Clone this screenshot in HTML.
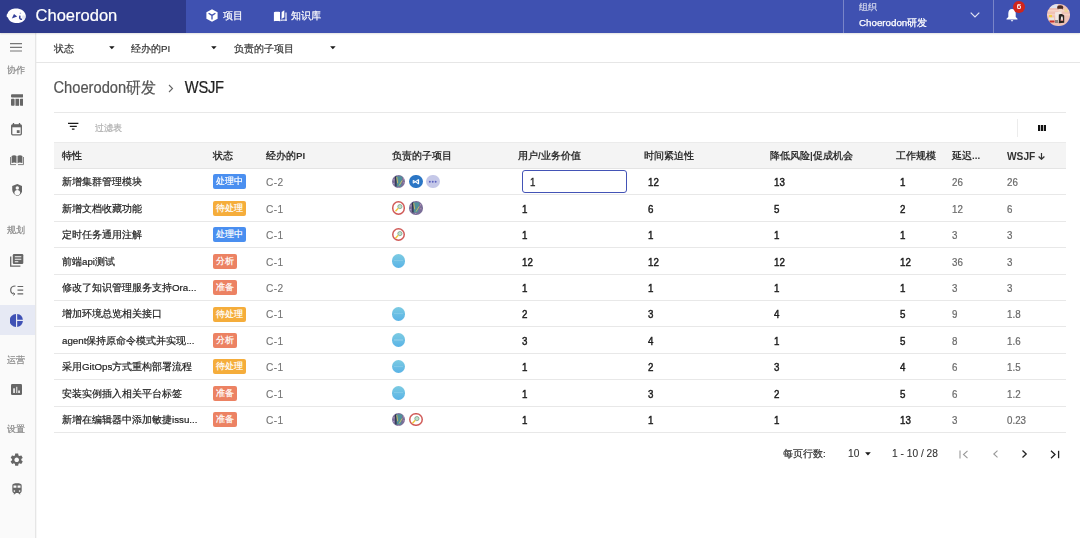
<!DOCTYPE html>
<html><head><meta charset="utf-8">
<style>
*{box-sizing:border-box}
html,body{margin:0;padding:0}
body{width:1080px;height:538px;overflow:hidden;position:relative;background:#fff;font-family:"Liberation Sans",sans-serif;color:#333;-webkit-text-stroke-width:0.2px}
.abs{position:absolute}
#hdr{position:absolute;left:0;top:0;width:1080px;height:33px;background:#3f51b1;box-shadow:0 1px 1.5px rgba(0,0,0,.12);z-index:2}
#hdrl{position:absolute;left:0;top:0;width:186px;height:33px;background:#2e3a8b;z-index:2}
.abs{z-index:3}
#side{position:absolute;left:0;top:33px;width:36px;height:505px;background:#fafafa;border-right:1px solid #e6e6e6;box-shadow:1px 0 1px rgba(0,0,0,.035)}
.slbl{position:absolute;left:0;width:32px;text-align:center;font-size:9px;color:#8a8a8a;line-height:12px}
.sic{position:absolute;left:9px;width:16px;height:16px}
#fbar{position:absolute;left:36px;top:62px;width:1044px;height:1px;background:#e6e6e6}
.flt{position:absolute;top:42px;font-size:9.75px;line-height:13px;color:#333}
.farr{position:absolute;top:46.3px;width:0;height:0;border-left:2.7px solid transparent;border-right:2.7px solid transparent;border-top:3.2px solid #1a1a1a}
.thead{position:absolute;left:54px;top:142px;width:1012px;height:27px;background:#f4f4f4;border-bottom:1px solid #e4e4e4;border-top:1px solid #ebebeb}
.th{position:absolute;top:148.5px;font-size:9.75px;line-height:14px;font-weight:bold;color:#333;white-space:nowrap;-webkit-text-stroke-width:0}
.sarr{font-weight:normal}
.rl{position:absolute;left:54px;width:1012px;height:1px;background:#e8e8e8}
.td{position:absolute;font-size:9.75px;line-height:14px;color:#222;white-space:nowrap}
.td.g{color:#6a6a6a;-webkit-text-stroke-width:0.2px}
.td.b{color:#1c1c1c;-webkit-text-stroke-width:0.4px}
.num{transform:translateY(0.9px) scaleY(1.15);transform-origin:50% 60%}
.tag{position:absolute;height:15px;border-radius:2px;color:#fff;font-size:9px;line-height:15px;text-align:center}
.av{position:absolute;width:13.5px;height:13.5px;border-radius:50%;overflow:hidden}
.av svg{position:absolute;left:0;top:0}
.inp{position:absolute;left:522px;width:105px;height:23.5px;border:1.7px solid #4353b6;border-radius:3px;background:#fff}
</style></head><body><div id="wrap" style="position:absolute;left:0;top:0;width:1080px;height:538px;opacity:0.999">
<div id="hdr"></div><div id="hdrl"></div>
<!-- logo -->
<svg class="abs" style="left:0;top:0" width="30" height="30" viewBox="0 0 30 30">
 <path d="M7.6 13.4 C9 9.8 12.8 8.6 16 8.6 C21 8.6 25 11 25.8 15.5 C26.2 20 22 23.1 17 23.1 C12.5 23.1 9 21.2 8 17.8 L6.6 16.4 L6.8 14.6 Z" fill="#fff"/>
 <path d="M11.8 18.4 L14 14 L17.2 16.6 Z" fill="#34409a"/>
 <path d="M19.9 15.6 C19.3 18.2 20.2 19.8 22 19.1" stroke="#34409a" stroke-width="1.5" fill="none"/>
 <circle cx="20.4" cy="13.2" r="0.8" fill="#aab0dc"/>
 <ellipse cx="23.6" cy="17.2" rx="1.6" ry="2" fill="#e3e5f2"/>
</svg>
<div class="abs" style="left:35.6px;top:4.9px;font-size:16.5px;line-height:20px;color:#fff">Choerodon</div>
<!-- nav -->
<svg class="abs" style="left:206px;top:9px" width="12" height="13" viewBox="0 0 12 13">
 <path d="M6 0.3 L11.6 3.3 L11.6 9.7 L6 12.7 L0.4 9.7 L0.4 3.3 Z" fill="#fff"/>
 <path d="M2.6 4.3 L6 6.4 L9.4 4.3 M6 6.4 L6 10.4" stroke="#3f51b1" stroke-width="1.3" fill="none"/>
</svg>
<div class="abs" style="left:222.5px;top:9px;font-size:9.75px;line-height:13px;color:#fff">项目</div>
<svg class="abs" style="left:273px;top:9px" width="15" height="13" viewBox="0 0 15 13">
 <path d="M0.9 3.3 C2.6 2.7 5.2 2.7 7 3.1 V12.3 C5.2 11.9 2.6 11.9 0.9 12.3 Z" fill="#fff"/>
 <path d="M8.5 9.9 L8.7 3 L11.3 1.2 L11.3 8.3 Z" fill="#fff"/>
 <rect x="12.3" y="3.5" width="1.4" height="8.3" fill="#fff" opacity=".8"/>
 <path d="M7.3 10.6 H13.7 V12 C11.5 11.7 9.5 11.9 7.3 12.3 Z" fill="#fff" opacity=".8"/>
</svg>
<div class="abs" style="left:291px;top:9px;font-size:9.75px;line-height:13px;color:#fff">知识库</div>
<!-- org -->
<div class="abs" style="left:843px;top:0;width:1px;height:33px;background:rgba(255,255,255,.3)"></div>
<div class="abs" style="left:993px;top:0;width:1px;height:33px;background:rgba(255,255,255,.3)"></div>
<div class="abs" style="left:859px;top:1px;font-size:9px;line-height:12px;color:rgba(255,255,255,.7)">组织</div>
<div class="abs" style="left:859px;top:15.5px;font-size:9.75px;line-height:13px;color:#fff;-webkit-text-stroke:0.25px #fff">Choerodon研发</div>
<svg class="abs" style="left:970px;top:12px" width="10" height="6" viewBox="0 0 10 6"><path d="M0.7 0.7 L5 5 L9.3 0.7" stroke="#fff" stroke-width="1.2" fill="none" opacity=".85"/></svg>
<!-- bell -->
<svg class="abs" style="left:1006px;top:8px" width="12" height="14" viewBox="0 0 12 14">
 <path d="M6 1 C8.5 1 9.7 3 9.7 5.5 L9.7 9 L11.5 10.8 L11.5 11.5 L0.5 11.5 L0.5 10.8 L2.3 9 L2.3 5.5 C2.3 3 3.5 1 6 1 Z" fill="#fff"/>
 <path d="M4.8 12.3 L7.2 12.3 C7.2 13 6.6 13.4 6 13.4 C5.4 13.4 4.8 13 4.8 12.3Z" fill="#fff"/>
</svg>
<div class="abs" style="left:1013px;top:0.5px;width:12px;height:12px;border-radius:50%;background:#d0251c;color:#fff;font-size:8px;line-height:12px;text-align:center">6</div>
<!-- avatar -->
<div class="abs" style="left:1047px;top:3.7px;width:22.6px;height:22.6px;border-radius:50%;background:#efc2b6;overflow:hidden">
 <svg width="23" height="23" viewBox="0 0 23 23" style="filter:blur(0.3px)">
  <g>
  <rect x="0" y="6" width="23" height="1.5" fill="#f6d3c8"/>
  <rect x="0" y="10" width="23" height="1.5" fill="#f6d0c4"/>
  <path d="M2 0 H11 L10 4 H3 Z" fill="#dfe3ee"/>
  <path d="M17 4.5 L20.5 5 L21 8.5 L17.5 8 Z" fill="#eed590" opacity=".8"/>
  <ellipse cx="13.2" cy="3.6" rx="3" ry="2.4" fill="#4a2c24"/>
  <rect x="11.2" y="4.8" width="4" height="3.4" fill="#f3d6c8"/>
  <path d="M8 8.3 L14.5 7.8 L15 17 L8.5 18.8 Z" fill="#f3e8e3"/>
  <path d="M11.8 10.5 C13 9.6 16.3 9.8 17.2 11.8 L17.2 18.8 L11.8 19.2 Z" fill="#2a2320"/>
  <path d="M14.2 12.5 L15.6 12.5 L16.2 16.8 L13.6 16.8 Z" fill="#f2ece8"/>
  <circle cx="15" cy="16.3" r="0.7" fill="#e05050"/>
  <rect x="2" y="11" width="3" height="2.5" fill="#f0d040"/>
  <rect x="2" y="13.5" width="5" height="3" fill="#e8e6e4"/>
  <rect x="2.5" y="16.5" width="5" height="2" fill="#c8302a"/>
  <rect x="8" y="16" width="3" height="3" fill="#8d8480"/>
  </g>
 </svg>
</div>

<!-- sidebar -->
<div id="side"></div>
<svg class="abs" style="left:10px;top:43px" width="12" height="9" viewBox="0 0 12 9"><path d="M0 0.6 H12 M0 4.3 H12 M0 8 H12" stroke="#777" stroke-width="1.2"/></svg>
<div class="slbl" style="top:64px">协作</div>
<svg class="abs" style="left:10.5px;top:94px" width="12.5" height="12" viewBox="0 0 12.5 12"><rect x="0" y="0.2" width="12.5" height="3.2" rx="1" fill="#666"/><rect x="0" y="4.8" width="3.6" height="7" rx="0.8" fill="#666"/><rect x="4.45" y="4.8" width="3.6" height="7" fill="#666"/><rect x="8.9" y="4.8" width="3.6" height="7" rx="0.8" fill="#666"/></svg>
<svg class="abs" style="left:11px;top:123px" width="11" height="12.5" viewBox="0 0 11 12.5"><path d="M2.5 0 V2 M8.5 0 V2" stroke="#666" stroke-width="1.3"/><rect x="0.7" y="1.8" width="9.6" height="10" rx="1" fill="none" stroke="#666" stroke-width="1.3"/><rect x="0.7" y="1.8" width="9.6" height="2.5" fill="#666"/><rect x="5.8" y="7.2" width="2.8" height="2.8" fill="#666"/></svg>
<svg class="abs" style="left:10px;top:155px" width="14" height="10.5" viewBox="0 0 14 10.5"><path d="M1.6 1 C3.2 0.1 5.2 0.1 6.5 1.1 V8.2 C5.2 7.4 3.2 7.4 1.6 8.2 Z" fill="#666"/><path d="M12.4 1 C10.8 0.1 8.8 0.1 7.5 1.1 V8.2 C8.8 7.4 10.8 7.4 12.4 8.2 Z" fill="#666"/><path d="M0.5 2 V9.6 H6 M13.5 2 V9.6 H8" stroke="#777" stroke-width="0.9" fill="none"/></svg>
<svg class="abs" style="left:11.7px;top:184.3px" width="10.6" height="12.2" viewBox="0 0 10 12"><path d="M5 0 L10 2 V5.5 C10 8.5 8 11 5 12 C2 11 0 8.5 0 5.5 V2 Z" fill="#666"/><circle cx="5" cy="3.9" r="1.7" fill="#fafafa"/><path d="M2.2 8.5 C2.2 6.9 3.5 6 5 6 C6.5 6 7.8 6.9 7.8 8.5 C7.8 9.3 7.3 10 6.8 10.5 C6.2 10.9 5.6 11.2 5 11.4 C4.4 11.2 3.8 10.9 3.2 10.5 C2.7 10 2.2 9.3 2.2 8.5Z" fill="#fafafa"/></svg>
<div class="slbl" style="top:224px">规划</div>
<svg class="abs" style="left:10px;top:253.5px" width="13.5" height="13" viewBox="0 0 13.5 13"><path d="M0.7 2.5 V12.2 H10.4" stroke="#666" stroke-width="1.3" fill="none"/><rect x="2.8" y="0" width="10.5" height="10" rx="1.2" fill="#666"/><path d="M4.8 2.8 H11.3 M4.8 5.3 H11.3 M4.8 7.8 H8.3" stroke="#fafafa" stroke-width="1.1"/></svg>
<svg class="abs" style="left:10px;top:285px" width="14" height="11" viewBox="0 0 14 11"><path d="M7.5 1.5 H13.2 M7.5 5.2 H13.2 M7.5 8.8 H13.2" stroke="#666" stroke-width="1.2"/><path d="M5.5 1 C2.5 1 0.7 2.8 0.7 5 C0.7 7.2 2.3 8.9 4.6 9" stroke="#666" stroke-width="1.2" fill="none"/><path d="M3.4 7.6 L4.9 9 L3.4 10.4" stroke="#666" stroke-width="1" fill="none"/></svg>
<div class="abs" style="left:0;top:305px;width:35px;height:30px;background:#e6e9f4"></div>
<svg class="abs" style="left:10px;top:314px" width="13" height="13" viewBox="0 0 13 13"><path d="M6 0.1 A6.4 6.4 0 0 0 6 12.9 Z" fill="#3f51b5"/><path d="M7.2 0.1 A6.4 6.4 0 0 1 12.9 5.8 H7.2 Z" fill="#3f51b5"/><path d="M7.2 7.1 H12.9 A6.4 6.4 0 0 1 7.2 12.9 Z" fill="#3f51b5"/></svg>
<div class="slbl" style="top:353.5px">运营</div>
<svg class="abs" style="left:11px;top:384px" width="11" height="11" viewBox="0 0 11 11"><rect width="11" height="11" rx="1.3" fill="#666"/><rect x="2.1" y="4.3" width="1.9" height="4.7" fill="#e0e0e0"/><rect x="5.2" y="2.8" width="1.1" height="6.2" fill="#e8e8e8"/><rect x="7.1" y="6.5" width="1.9" height="2.5" fill="#e0e0e0"/></svg>
<div class="slbl" style="top:423px">设置</div>
<svg class="abs" style="left:8.9px;top:451.5px" width="15.4" height="15.4" viewBox="0 0 24 24"><path fill="#666" d="M19.14 12.94c.04-.3.06-.61.06-.94 0-.32-.02-.64-.07-.94l2.03-1.58c.18-.14.23-.41.12-.61l-1.92-3.32c-.12-.22-.37-.29-.59-.22l-2.39.96c-.5-.38-1.03-.7-1.62-.94l-.36-2.54c-.04-.24-.24-.41-.48-.41h-3.840c-.24 0-.43.17-.47.41l-.36 2.54c-.59.24-1.13.57-1.62.94l-2.39-.96c-.22-.08-.47 0-.59.22L2.74 8.87c-.12.21-.08.47.12.61l2.03 1.58c-.05.3-.09.63-.09.94s.02.64.07.94l-2.03 1.58c-.18.14-.23.41-.12.61l1.92 3.32c.12.22.37.29.59.22l2.39-.96c.5.38 1.03.7 1.62.94l.36 2.54c.05.24.24.41.48.41h3.84c.24 0 .44-.17.47-.41l.36-2.54c.59-.24 1.13-.56 1.62-.94l2.39.96c.22.08.47 0 .59-.22l1.920-3.32c.12-.22.07-.47-.12-.61l-2.01-1.58zM12 15.6c-1.98 0-3.6-1.62-3.6-3.6s1.62-3.6 3.6-3.6 3.6 1.62 3.6 3.6-1.62 3.6-3.6 3.6z"/></svg>
<svg class="abs" style="left:9.66px;top:482.1px" width="14" height="14" viewBox="0 0 24 24"><path fill="#666" d="M12 2c-4 0-8 .5-8 4v9.5C4 17.43 5.57 19 7.5 19L6 20.5v.5h2.23l2-2H14l2 2h2v-.5L16.5 19c1.93 0 3.5-1.57 3.5-3.5V6c0-3.5-3.58-4-8-4zM7.5 17c-.83 0-1.5-.67-1.5-1.5S6.670 14 7.5 14s1.5.67 1.5 1.5S8.33 17 7.5 17zm3.5-7H6V6h5v4zm2 0V6h5v4h-5zm3.5 7c-.83 0-1.5-.67-1.5-1.5s.67-1.5 1.5-1.5 1.5.67 1.5 1.5-.67 1.5-1.5 1.5z"/></svg>

<!-- filter bar -->
<div id="fbar"></div>
<div class="flt" style="left:54px">状态</div><svg class="abs" style="left:108.5px;top:46.1px" width="6" height="4" viewBox="0 0 6 4"><path d="M0.1 0.2 H5.6 L2.85 3.3 Z" fill="#1a1a1a"/></svg>
<div class="flt" style="left:131px">经办的PI</div><svg class="abs" style="left:211px;top:46.1px" width="6" height="4" viewBox="0 0 6 4"><path d="M0.1 0.2 H5.6 L2.85 3.3 Z" fill="#1a1a1a"/></svg>
<div class="flt" style="left:234px">负责的子项目</div><svg class="abs" style="left:330px;top:46.1px" width="6" height="4" viewBox="0 0 6 4"><path d="M0.1 0.2 H5.6 L2.85 3.3 Z" fill="#1a1a1a"/></svg>

<!-- title -->
<div class="abs" style="left:53.5px;top:78px;font-size:14.7px;line-height:18px;color:#555;transform:translateY(0.6px) scaleY(1.08);transform-origin:0 75%">Choerodon研发</div>
<svg class="abs" style="left:168px;top:83.5px" width="6" height="9" viewBox="0 0 6 9"><path d="M1 1 L4.5 4.5 L1 8" stroke="#666" stroke-width="1.1" fill="none"/></svg>
<div class="abs" style="left:184.8px;top:78px;font-size:14.7px;line-height:18px;color:#222;letter-spacing:-0.25px;transform:translateY(0.8px) scaleY(1.1);transform-origin:0 75%">WSJF</div>
<div class="abs" style="left:54px;top:111.5px;width:1012px;height:1px;background:#e8e8e8"></div>

<!-- table toolbar -->
<svg class="abs" style="left:68px;top:122px" width="11" height="9" viewBox="0 0 11 9"><path d="M0 1.4 H10.4 M1.8 4.4 H8.8 M3.9 7.1 H6.5" stroke="#1a1a1a" stroke-width="1.15"/></svg>
<div class="abs" style="left:94.8px;top:122px;font-size:9px;line-height:13px;color:#b0b0b0">过滤表</div>
<div class="abs" style="left:1016.5px;top:119px;width:1px;height:18px;background:#ececec"></div>
<svg class="abs" style="left:1038px;top:125px" width="8" height="6" viewBox="0 0 8 6"><rect x="0" y="0" width="2.2" height="6" fill="#111"/><rect x="2.9" y="0" width="2.2" height="6" fill="#111"/><rect x="5.8" y="0" width="2.2" height="6" fill="#111"/></svg>

<div class="thead"></div>
<div class="th" style="left:62px">特性</div>
<div class="th" style="left:213px">状态</div>
<div class="th" style="left:266px">经办的PI</div>
<div class="th" style="left:392px">负责的子项目</div>
<div class="th" style="left:518px">用户/业务价值</div>
<div class="th" style="left:644px">时间紧迫性</div>
<div class="th" style="left:770px">降低风险|促成机会</div>
<div class="th" style="left:896px">工作规模</div>
<div class="th" style="left:952px">延迟...</div>
<div class="th" style="left:1007px;font-size:10.2px;top:150px">WSJF</div><svg class="abs" style="left:1038px;top:153.3px" width="7" height="7" viewBox="0 0 7 7"><path d="M3.5 0 V6.3 M0.6 3.5 L3.5 6.3 L6.4 3.5" stroke="#333" stroke-width="1.2" fill="none"/></svg>
<div class="rl" style="top:194.32px"></div>
<div class="td" style="left:62px;top:175.31px">新增集群管理模块</div>
<div class="tag" style="left:213px;top:174.41px;width:33px;background:#4a8ff0">处理中</div>
<div class="td g num" style="left:266px;top:175.31px;font-size:10.2px;color:#737373;letter-spacing:0.35px;-webkit-text-stroke-width:0.1px">C-2</div>
<div class="av" style="left:391.7px;top:174.9px;background:#7a6e98"><svg width="13.5" height="13.5" viewBox="0 0 14 14"><circle cx="2" cy="5" r="0.7" fill="#c8a2c4"/><circle cx="1.8" cy="9" r="0.6" fill="#b9a8d8"/><circle cx="12" cy="4" r="0.7" fill="#c8a2c4"/><circle cx="12.3" cy="8" r="0.6" fill="#d0a8c0"/><circle cx="7" cy="12.8" r="0.6" fill="#c8a2c4"/><circle cx="6" cy="0.9" r="0.6" fill="#b9a8d8"/><path d="M4.4 1.3 L10.8 1.6 L9.4 12 L4.6 12 Z" fill="#4f909a"/><path d="M3 1.5 L4.6 1.3 L4.8 12 L3.4 12 Z" fill="#2e3550"/><path d="M4.9 2 L5.9 8.6" stroke="#d8c060" stroke-width="0.9"/><path d="M7.3 11 L10.6 5.6" stroke="#d8c060" stroke-width="0.9"/></svg></div>
<div class="av" style="left:409.0px;top:174.9px;background:#2b76c5"><svg width="13.5" height="13.5" viewBox="0 0 14 14"><path d="M4.4 5.4 V8.6" stroke="#fff" stroke-width="1.1"/><path d="M4.4 5.6 L9.5 9 M4.4 8.4 L9.5 5" stroke="#fff" stroke-width="1.1" fill="none"/><path d="M9.8 4.5 V9.5" stroke="#fff" stroke-width="1.4"/></svg></div>
<div class="av" style="left:426.3px;top:174.9px;background:#c5c8e8"><svg width="13.5" height="13.5" viewBox="0 0 14 14"><circle cx="4" cy="7" r="1" fill="#5c63c0"/><circle cx="7" cy="7" r="1" fill="#5c63c0"/><circle cx="10" cy="7" r="1" fill="#5c63c0"/></svg></div>
<div class="inp" style="top:169.71px"></div>
<div class="td num" style="left:530px;top:175.31px;color:#222;-webkit-text-stroke-width:0.25px">1</div>
<div class="td b num" style="left:648px;top:175.31px">12</div>
<div class="td b num" style="left:774px;top:175.31px">13</div>
<div class="td b num" style="left:900px;top:175.31px">1</div>
<div class="td g num" style="left:952px;top:175.31px">26</div>
<div class="td g num" style="left:1007px;top:175.31px">26</div>
<div class="rl" style="top:220.74px"></div>
<div class="td" style="left:62px;top:201.73px">新增文档收藏功能</div>
<div class="tag" style="left:213px;top:200.83px;width:33px;background:#f5ad3b">待处理</div>
<div class="td g num" style="left:266px;top:201.73px;font-size:10.2px;color:#737373;letter-spacing:0.35px;-webkit-text-stroke-width:0.1px">C-1</div>
<div class="av" style="left:391.7px;top:201.3px;background:#fff;box-shadow:inset 0 0 0 1.5px #d05a57"><svg width="13.5" height="13.5" viewBox="0 0 14 14"><circle cx="8.2" cy="5.8" r="2.2" fill="#bfe3c8" stroke="#6f8f80" stroke-width="0.7"/><path d="M3.6 10.6 L6.5 7.6" stroke="#f0c93a" stroke-width="1.6"/></svg></div>
<div class="av" style="left:409.0px;top:201.3px;background:#7a6e98"><svg width="13.5" height="13.5" viewBox="0 0 14 14"><circle cx="2" cy="5" r="0.7" fill="#c8a2c4"/><circle cx="1.8" cy="9" r="0.6" fill="#b9a8d8"/><circle cx="12" cy="4" r="0.7" fill="#c8a2c4"/><circle cx="12.3" cy="8" r="0.6" fill="#d0a8c0"/><circle cx="7" cy="12.8" r="0.6" fill="#c8a2c4"/><circle cx="6" cy="0.9" r="0.6" fill="#b9a8d8"/><path d="M4.4 1.3 L10.8 1.6 L9.4 12 L4.6 12 Z" fill="#4f909a"/><path d="M3 1.5 L4.6 1.3 L4.8 12 L3.4 12 Z" fill="#2e3550"/><path d="M4.9 2 L5.9 8.6" stroke="#d8c060" stroke-width="0.9"/><path d="M7.3 11 L10.6 5.6" stroke="#d8c060" stroke-width="0.9"/></svg></div>
<div class="td b num" style="left:522px;top:201.73px">1</div>
<div class="td b num" style="left:648px;top:201.73px">6</div>
<div class="td b num" style="left:774px;top:201.73px">5</div>
<div class="td b num" style="left:900px;top:201.73px">2</div>
<div class="td g num" style="left:952px;top:201.73px">12</div>
<div class="td g num" style="left:1007px;top:201.73px">6</div>
<div class="rl" style="top:247.16px"></div>
<div class="td" style="left:62px;top:228.15px">定时任务通用注解</div>
<div class="tag" style="left:213px;top:227.25px;width:33px;background:#4a8ff0">处理中</div>
<div class="td g num" style="left:266px;top:228.15px;font-size:10.2px;color:#737373;letter-spacing:0.35px;-webkit-text-stroke-width:0.1px">C-1</div>
<div class="av" style="left:391.7px;top:227.7px;background:#fff;box-shadow:inset 0 0 0 1.5px #d05a57"><svg width="13.5" height="13.5" viewBox="0 0 14 14"><circle cx="8.2" cy="5.8" r="2.2" fill="#bfe3c8" stroke="#6f8f80" stroke-width="0.7"/><path d="M3.6 10.6 L6.5 7.6" stroke="#f0c93a" stroke-width="1.6"/></svg></div>
<div class="td b num" style="left:522px;top:228.15px">1</div>
<div class="td b num" style="left:648px;top:228.15px">1</div>
<div class="td b num" style="left:774px;top:228.15px">1</div>
<div class="td b num" style="left:900px;top:228.15px">1</div>
<div class="td g num" style="left:952px;top:228.15px">3</div>
<div class="td g num" style="left:1007px;top:228.15px">3</div>
<div class="rl" style="top:273.58px"></div>
<div class="td" style="left:62px;top:254.57px">前端api测试</div>
<div class="tag" style="left:213px;top:253.67px;width:24px;background:#ec8263">分析</div>
<div class="td g num" style="left:266px;top:254.57px;font-size:10.2px;color:#737373;letter-spacing:0.35px;-webkit-text-stroke-width:0.1px">C-1</div>
<div class="av" style="left:391.7px;top:254.1px;background:linear-gradient(#7ccbe2,#5ab3e6)"><div style="position:absolute;left:2px;top:6px;width:9.5px;height:1.2px;background:rgba(255,255,255,.15)"></div></div>
<div class="td b num" style="left:522px;top:254.57px">12</div>
<div class="td b num" style="left:648px;top:254.57px">12</div>
<div class="td b num" style="left:774px;top:254.57px">12</div>
<div class="td b num" style="left:900px;top:254.57px">12</div>
<div class="td g num" style="left:952px;top:254.57px">36</div>
<div class="td g num" style="left:1007px;top:254.57px">3</div>
<div class="rl" style="top:300.00px"></div>
<div class="td" style="left:62px;top:280.99px">修改了知识管理服务支持Ora...</div>
<div class="tag" style="left:213px;top:280.09px;width:24px;background:#ec8263">准备</div>
<div class="td g num" style="left:266px;top:280.99px;font-size:10.2px;color:#737373;letter-spacing:0.35px;-webkit-text-stroke-width:0.1px">C-2</div>
<div class="td b num" style="left:522px;top:280.99px">1</div>
<div class="td b num" style="left:648px;top:280.99px">1</div>
<div class="td b num" style="left:774px;top:280.99px">1</div>
<div class="td b num" style="left:900px;top:280.99px">1</div>
<div class="td g num" style="left:952px;top:280.99px">3</div>
<div class="td g num" style="left:1007px;top:280.99px">3</div>
<div class="rl" style="top:326.42px"></div>
<div class="td" style="left:62px;top:307.41px">增加环境总览相关接口</div>
<div class="tag" style="left:213px;top:306.51px;width:33px;background:#f5ad3b">待处理</div>
<div class="td g num" style="left:266px;top:307.41px;font-size:10.2px;color:#737373;letter-spacing:0.35px;-webkit-text-stroke-width:0.1px">C-1</div>
<div class="av" style="left:391.7px;top:307.0px;background:linear-gradient(#7ccbe2,#5ab3e6)"><div style="position:absolute;left:2px;top:6px;width:9.5px;height:1.2px;background:rgba(255,255,255,.15)"></div></div>
<div class="td b num" style="left:522px;top:307.41px">2</div>
<div class="td b num" style="left:648px;top:307.41px">3</div>
<div class="td b num" style="left:774px;top:307.41px">4</div>
<div class="td b num" style="left:900px;top:307.41px">5</div>
<div class="td g num" style="left:952px;top:307.41px">9</div>
<div class="td g num" style="left:1007px;top:307.41px">1.8</div>
<div class="rl" style="top:352.84px"></div>
<div class="td" style="left:62px;top:333.83px">agent保持原命令模式并实现...</div>
<div class="tag" style="left:213px;top:332.93px;width:24px;background:#ec8263">分析</div>
<div class="td g num" style="left:266px;top:333.83px;font-size:10.2px;color:#737373;letter-spacing:0.35px;-webkit-text-stroke-width:0.1px">C-1</div>
<div class="av" style="left:391.7px;top:333.4px;background:linear-gradient(#7ccbe2,#5ab3e6)"><div style="position:absolute;left:2px;top:6px;width:9.5px;height:1.2px;background:rgba(255,255,255,.15)"></div></div>
<div class="td b num" style="left:522px;top:333.83px">3</div>
<div class="td b num" style="left:648px;top:333.83px">4</div>
<div class="td b num" style="left:774px;top:333.83px">1</div>
<div class="td b num" style="left:900px;top:333.83px">5</div>
<div class="td g num" style="left:952px;top:333.83px">8</div>
<div class="td g num" style="left:1007px;top:333.83px">1.6</div>
<div class="rl" style="top:379.26px"></div>
<div class="td" style="left:62px;top:360.25px">采用GitOps方式重构部署流程</div>
<div class="tag" style="left:213px;top:359.35px;width:33px;background:#f5ad3b">待处理</div>
<div class="td g num" style="left:266px;top:360.25px;font-size:10.2px;color:#737373;letter-spacing:0.35px;-webkit-text-stroke-width:0.1px">C-1</div>
<div class="av" style="left:391.7px;top:359.8px;background:linear-gradient(#7ccbe2,#5ab3e6)"><div style="position:absolute;left:2px;top:6px;width:9.5px;height:1.2px;background:rgba(255,255,255,.15)"></div></div>
<div class="td b num" style="left:522px;top:360.25px">1</div>
<div class="td b num" style="left:648px;top:360.25px">2</div>
<div class="td b num" style="left:774px;top:360.25px">3</div>
<div class="td b num" style="left:900px;top:360.25px">4</div>
<div class="td g num" style="left:952px;top:360.25px">6</div>
<div class="td g num" style="left:1007px;top:360.25px">1.5</div>
<div class="rl" style="top:405.68px"></div>
<div class="td" style="left:62px;top:386.67px">安装实例插入相关平台标签</div>
<div class="tag" style="left:213px;top:385.77px;width:24px;background:#ec8263">准备</div>
<div class="td g num" style="left:266px;top:386.67px;font-size:10.2px;color:#737373;letter-spacing:0.35px;-webkit-text-stroke-width:0.1px">C-1</div>
<div class="av" style="left:391.7px;top:386.2px;background:linear-gradient(#7ccbe2,#5ab3e6)"><div style="position:absolute;left:2px;top:6px;width:9.5px;height:1.2px;background:rgba(255,255,255,.15)"></div></div>
<div class="td b num" style="left:522px;top:386.67px">1</div>
<div class="td b num" style="left:648px;top:386.67px">3</div>
<div class="td b num" style="left:774px;top:386.67px">2</div>
<div class="td b num" style="left:900px;top:386.67px">5</div>
<div class="td g num" style="left:952px;top:386.67px">6</div>
<div class="td g num" style="left:1007px;top:386.67px">1.2</div>
<div class="rl" style="top:432.10px"></div>
<div class="td" style="left:62px;top:413.09px">新增在编辑器中添加敏捷issu...</div>
<div class="tag" style="left:213px;top:412.19px;width:24px;background:#ec8263">准备</div>
<div class="td g num" style="left:266px;top:413.09px;font-size:10.2px;color:#737373;letter-spacing:0.35px;-webkit-text-stroke-width:0.1px">C-1</div>
<div class="av" style="left:391.7px;top:412.6px;background:#7a6e98"><svg width="13.5" height="13.5" viewBox="0 0 14 14"><circle cx="2" cy="5" r="0.7" fill="#c8a2c4"/><circle cx="1.8" cy="9" r="0.6" fill="#b9a8d8"/><circle cx="12" cy="4" r="0.7" fill="#c8a2c4"/><circle cx="12.3" cy="8" r="0.6" fill="#d0a8c0"/><circle cx="7" cy="12.8" r="0.6" fill="#c8a2c4"/><circle cx="6" cy="0.9" r="0.6" fill="#b9a8d8"/><path d="M4.4 1.3 L10.8 1.6 L9.4 12 L4.6 12 Z" fill="#4f909a"/><path d="M3 1.5 L4.6 1.3 L4.8 12 L3.4 12 Z" fill="#2e3550"/><path d="M4.9 2 L5.9 8.6" stroke="#d8c060" stroke-width="0.9"/><path d="M7.3 11 L10.6 5.6" stroke="#d8c060" stroke-width="0.9"/></svg></div>
<div class="av" style="left:409.0px;top:412.6px;background:#fff;box-shadow:inset 0 0 0 1.5px #d05a57"><svg width="13.5" height="13.5" viewBox="0 0 14 14"><circle cx="8.2" cy="5.8" r="2.2" fill="#bfe3c8" stroke="#6f8f80" stroke-width="0.7"/><path d="M3.6 10.6 L6.5 7.6" stroke="#f0c93a" stroke-width="1.6"/></svg></div>
<div class="td b num" style="left:522px;top:413.09px">1</div>
<div class="td b num" style="left:648px;top:413.09px">1</div>
<div class="td b num" style="left:774px;top:413.09px">1</div>
<div class="td b num" style="left:900px;top:413.09px">13</div>
<div class="td g num" style="left:952px;top:413.09px">3</div>
<div class="td g num" style="left:1007px;top:413.09px">0.23</div>

<!-- pagination -->
<div class="abs" style="left:783px;top:447px;font-size:9.75px;line-height:13px;color:#333">每页行数:</div>
<div class="abs num" style="left:848px;top:446px;font-size:10.2px;line-height:13px;color:#333;-webkit-text-stroke-width:0.1px">10</div>
<svg class="abs" style="left:864.6px;top:451.6px" width="6" height="4" viewBox="0 0 6 4"><path d="M0.1 0.2 H5.8 L2.95 3.4 Z" fill="#1a1a1a"/></svg>
<div class="abs num" style="left:892px;top:446px;font-size:10.2px;line-height:13px;color:#333;-webkit-text-stroke-width:0.1px">1 - 10 / 28</div>
<svg class="abs" style="left:959px;top:449.5px" width="10" height="9" viewBox="0 0 10 9"><path d="M1 0.5 V8.5" stroke="#999" stroke-width="1.1"/><path d="M8.5 0.8 L4.5 4.5 L8.5 8.2" stroke="#999" stroke-width="1.1" fill="none"/></svg>
<svg class="abs" style="left:992px;top:449.8px" width="7" height="8" viewBox="0 0 7 8"><path d="M5.5 0.6 L1.8 4 L5.5 7.4" stroke="#999" stroke-width="1.1" fill="none"/></svg>
<svg class="abs" style="left:1021px;top:449.8px" width="7" height="8" viewBox="0 0 7 8"><path d="M1.5 0.6 L5.2 4 L1.5 7.4" stroke="#222" stroke-width="1.3" fill="none"/></svg>
<svg class="abs" style="left:1050px;top:449.5px" width="10" height="9" viewBox="0 0 10 9"><path d="M1 0.8 L5 4.5 L1 8.2" stroke="#222" stroke-width="1.3" fill="none"/><path d="M8.6 0.8 V8.2" stroke="#222" stroke-width="1.3"/></svg>
</div></body></html>
